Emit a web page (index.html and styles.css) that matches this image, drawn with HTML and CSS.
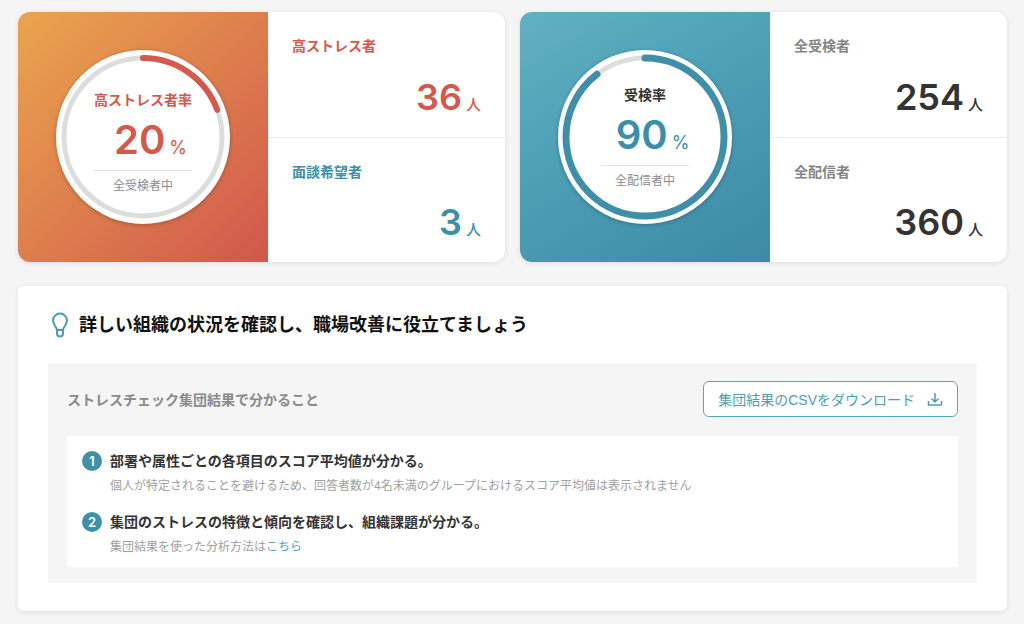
FILE: index.html
```html
<!DOCTYPE html>
<html lang="ja">
<head>
  <meta charset="UTF-8">
  <meta name="viewport" content="width=device-width, initial-scale=1">
  <title>ストレスチェック集団結果</title>
  <link rel="stylesheet" href="styles.css">
</head>
<body>
  <main class="page">
    <div class="cards">
      <section class="card">
        <div class="visual visual-stress">
          <div class="gauge">
            <svg class="ring" viewBox="0 0 174 174" aria-hidden="true">
              <circle class="ring-track" cx="87" cy="87" r="79" />
              <circle class="ring-value ring-red" cx="87" cy="87" r="79" pathLength="100" stroke-dasharray="19.4 100" transform="rotate(-90 87 87)" />
            </svg>
            <div class="gauge-text gauge-text-low">
              <h2 class="gauge-label red">高ストレス者率</h2>
              <p class="gauge-number red">20<span class="unit">%</span></p>
              <p class="gauge-note">全受検者中</p>
            </div>
          </div>
        </div>
        <dl class="stats">
          <div class="stat red">
            <dt>高ストレス者</dt>
            <dd>36<span class="unit">人</span></dd>
          </div>
          <div class="stat teal">
            <dt>面談希望者</dt>
            <dd>3<span class="unit">人</span></dd>
          </div>
        </dl>
      </section>

      <section class="card">
        <div class="visual visual-exam">
          <div class="gauge">
            <svg class="ring" viewBox="0 0 174 174" aria-hidden="true">
              <circle class="ring-track" cx="87" cy="87" r="79" />
              <circle class="ring-value ring-teal" cx="87" cy="87" r="79" pathLength="100" stroke-dasharray="89.6 100" transform="rotate(-90 87 87)" />
            </svg>
            <div class="gauge-text">
              <h2 class="gauge-label">受検率</h2>
              <p class="gauge-number teal">90<span class="unit">%</span></p>
              <p class="gauge-note">全配信者中</p>
            </div>
          </div>
        </div>
        <dl class="stats">
          <div class="stat plain">
            <dt>全受検者</dt>
            <dd>254<span class="unit">人</span></dd>
          </div>
          <div class="stat plain">
            <dt>全配信者</dt>
            <dd>360<span class="unit">人</span></dd>
          </div>
        </dl>
      </section>
    </div>

    <section class="panel">
      <h1 class="panel-title">
        <svg class="bulb" viewBox="0 0 18 26" aria-hidden="true">
          <path d="M6 18C6 15 2 13 2 8.600a7 7 0 0 1 14 0C16 13 12 15 12 18Z" />
          <path d="M6 18v3.500a3 3 0 0 0 6 0V18" />
        </svg>
        詳しい組織の状況を確認し、職場改善に役立てましょう
      </h1>

      <div class="box">
        <div class="box-head">
          <h2>ストレスチェック集団結果で分かること</h2>
          <button type="button" class="download">
            集団結果のCSVをダウンロード
            <svg class="download-icon" viewBox="0 0 16 16" aria-hidden="true">
              <path d="M8 2v9M4.500 7.500 8 11 11.500 7.500M1.500 10v4h13v-4" />
            </svg>
          </button>
        </div>

        <ol class="points">
          <li>
            <span class="badge">1</span>
            <div>
              <h3>部署や属性ごとの各項目のスコア平均値が分かる。</h3>
              <p>個人が特定されることを避けるため、回答者数が4名未満のグループにおけるスコア平均値は表示されません</p>
            </div>
          </li>
          <li>
            <span class="badge">2</span>
            <div>
              <h3>集団のストレスの特徴と傾向を確認し、組織課題が分かる。</h3>
              <p>集団結果を使った分析方法は<a href="#">こちら</a></p>
            </div>
          </li>
        </ol>
      </div>
    </section>
  </main>
</body>
</html>
```
FILE: styles.css
```css
* {
  box-sizing: border-box;
}

body {
  margin: 0;
  background: #f5f5f5;
  color: #333;
  font-family: "Liberation Sans", "Noto Sans CJK JP", sans-serif;
  font-size: 14px;
}

h1, h2, h3, p, dl, dd, ol {
  margin: 0;
  padding: 0;
}

.page {
  padding: 12px 17px 12px 18px;
}

.red {
  color: #d2594c;
}

.teal {
  color: #3c8fa8;
}

/* summary cards */
.cards {
  display: grid;
  grid-template-columns: 1fr 1fr;
  gap: 15px;
}

.card {
  display: flex;
  background: #fff;
  border-radius: 12px;
  overflow: hidden;
  box-shadow: 0 1px 5px rgba(0, 0, 0, 0.1);
}

.visual {
  padding: 38px;
}

.visual-stress {
  background: linear-gradient(135deg, #eaa54e, #d1574c);
}

.visual-exam {
  background: linear-gradient(150deg, #62b0c2, #4fa1b7 40%, #3c8aa5);
}

.gauge {
  display: grid;
  place-items: center;
  border-radius: 50%;
  background: #fff;
  box-shadow: 0 1px 4px rgba(0, 0, 0, 0.25);
}

.ring,
.gauge-text {
  grid-area: 1 / 1;
}

.ring {
  width: 174px;
  height: 174px;
}

.ring circle {
  fill: none;
}

.ring-track {
  stroke: #dcdddd;
  stroke-width: 5;
}

.ring-value {
  stroke-linecap: round;
}

.ring-red {
  stroke: #d2594c;
  stroke-width: 6;
}

.ring-teal {
  stroke: #3f8fa8;
  stroke-width: 7;
}

.gauge-text {
  padding-top: 2px;
  text-align: center;
}

.gauge-text-low {
  padding-top: 12px;
}

.gauge-label {
  font-size: 14px;
  line-height: 20px;
}

.gauge-number {
  padding-left: 15px;
  font-family: Inter, sans-serif;
  font-size: 40px;
  font-weight: 600;
  line-height: 60px;
}

.gauge-number .unit {
  margin-left: 4px;
  font-size: 18px;
  font-weight: 400;
  line-height: 1;
}

.gauge-note {
  padding-top: 5px;
  border-top: 1px solid #e2e2e2;
  color: #8c8c8c;
  font-size: 12px;
  line-height: 20px;
}

.stats {
  flex: 1;
  display: grid;
  grid-template-rows: 1fr 1fr;
}

.stat {
  display: flex;
  flex-direction: column;
  justify-content: space-between;
  padding: 24px 24px 20px;
}

.stat + .stat {
  border-top: 1px solid #ebebeb;
}

.stat dt {
  font-weight: bold;
  line-height: 20px;
}

.stat dd {
  font-family: Inter, "Noto Sans CJK JP", sans-serif;
  font-size: 36px;
  font-weight: 600;
  line-height: 40px;
  text-align: right;
}

.stat .unit {
  margin-left: 4px;
  font-size: 15px;
  font-weight: 500;
  line-height: 1;
}

.plain dt {
  color: #858585;
}

/* explanation panel */
.panel {
  margin-top: 24px;
  padding: 26px 30px 28px;
  background: #fff;
  border-radius: 6px;
  box-shadow: 0 1px 5px rgba(0, 0, 0, 0.1);
}

.panel-title {
  display: flex;
  align-items: center;
  gap: 10px;
  padding-left: 3px;
  color: #111;
  font-size: 18px;
  line-height: 26px;
}

.bulb {
  width: 18px;
  height: 26px;
  fill: none;
  stroke: #4a9bb3;
  stroke-width: 2;
}

.box {
  margin-top: 25px;
  padding: 18px 19px 16px;
  background: #f5f5f5;
}

.box-head {
  display: flex;
  align-items: center;
  justify-content: space-between;
  margin-bottom: 19px;
}

.box-head h2 {
  color: #8a8a8a;
  font-size: 14px;
}

.download {
  display: flex;
  align-items: center;
  gap: 12px;
  height: 36px;
  padding: 0 14px;
  background: #fff;
  border: 1px solid #5aa5b9;
  border-radius: 6px;
  color: #4f9db3;
  font: inherit;
  cursor: pointer;
}

.download-icon {
  width: 16px;
  height: 16px;
  fill: none;
  stroke: #4f9db3;
  stroke-width: 1.5;
}

.points {
  display: grid;
  gap: 15px;
  padding: 14px 15px 10px;
  background: #fff;
  list-style: none;
}

.points li {
  display: flex;
  gap: 8px;
}

.badge {
  display: grid;
  place-items: center;
  width: 20px;
  height: 20px;
  margin-top: 1px;
  border-radius: 50%;
  background: #3f8fa8;
  color: #fff;
  font-family: Inter, sans-serif;
  font-size: 13px;
  font-weight: 600;
}

.points h3 {
  font-size: 14px;
  line-height: 22px;
}

.points p {
  padding-top: 4px;
  color: #a0a0a0;
  font-size: 12px;
  line-height: 20px;
}

.points a {
  color: #4aa3bd;
  text-decoration: none;
}
```
